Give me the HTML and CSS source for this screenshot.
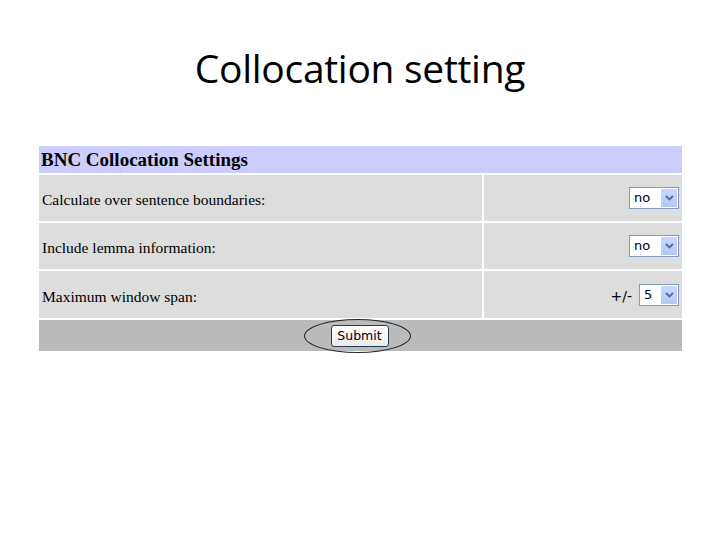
FILE: index.html
```html
<!DOCTYPE html>
<html>
<head>
<meta charset="utf-8">
<link rel="stylesheet" href="styles.css">
</head>
<body>
<h1 class="title">Collocation setting</h1>
<div class="settings">
  <div class="head">BNC Collocation Settings</div>
  <div class="label">Calculate over sentence boundaries:</div>
  <div class="control"><div class="sel"><span class="val">no</span><span class="arrow"><svg width="9" height="6" viewBox="0 0 9 6"><path d="M1 1 L4.5 4.5 L8 1" fill="none" stroke="#4a6cb0" stroke-width="1.8"/></svg></span></div></div>
  <div class="label">Include lemma information:</div>
  <div class="control"><div class="sel"><span class="val">no</span><span class="arrow"><svg width="9" height="6" viewBox="0 0 9 6"><path d="M1 1 L4.5 4.5 L8 1" fill="none" stroke="#4a6cb0" stroke-width="1.8"/></svg></span></div></div>
  <div class="label">Maximum window span:</div>
  <div class="control"><span class="pm">+/-</span><div class="sel narrow"><span class="val">5</span><span class="arrow"><svg width="9" height="6" viewBox="0 0 9 6"><path d="M1 1 L4.5 4.5 L8 1" fill="none" stroke="#4a6cb0" stroke-width="1.8"/></svg></span></div></div>
  <div class="foot">
    <div class="btnwrap">
      <span class="btn">Submit</span>
      <span class="ring"></span>
    </div>
  </div>
</div>
</body>
</html>
```
FILE: styles.css
```css
html, body {
  margin: 0;
  padding: 0;
  background: #ffffff;
}
body {
  width: 720px;
  height: 540px;
  overflow: hidden;
}
.title {
  margin: 0;
  padding-top: 42px;
  height: 146px;
  box-sizing: border-box;
  text-align: center;
  font-family: "Open Sans", sans-serif;
  font-weight: 400;
  font-size: 39px;
  line-height: 52px;
  color: #000;
  letter-spacing: -0.3px;
}
.settings {
  margin-left: 39px;
  width: 643px;
  display: grid;
  grid-template-columns: 443px 198px;
  grid-template-rows: 27px 46px 46px 47px 31px;
  gap: 2px;
  font-family: "Liberation Serif", serif;
}
.head {
  grid-column: 1 / 3;
  background: #ccccff;
  font-weight: bold;
  font-size: 19px;
  padding-left: 2px;
  display: flex;
  align-items: center;
  padding-top: 1px;
  color: #000;
}
.label {
  background: #dddddd;
  font-size: 15.5px;
  display: flex;
  align-items: center;
  padding-left: 3px;
  padding-top: 4px;
  color: #000;
}
.control {
  background: #dddddd;
  display: flex;
  align-items: center;
  justify-content: flex-end;
  padding-right: 3px;
}
.sel {
  width: 50px;
  height: 22px;
  box-sizing: border-box;
  border: 1px solid #7f9db9;
  background: #ffffff;
  display: flex;
  align-items: stretch;
}
.sel.narrow {
  width: 40px;
}
.val {
  flex: 1;
  font-family: "DejaVu Sans", sans-serif;
  font-size: 13px;
  line-height: 20px;
  padding-left: 4px;
  color: #000;
}
.arrow {
  width: 16px;
  margin: 1px;
  background: linear-gradient(#c9d8fb, #b5c9f7);
  display: flex;
  align-items: center;
  justify-content: center;
}
.pm {
  font-family: "DejaVu Sans", sans-serif;
  font-size: 14px;
  margin-right: 7px;
  margin-top: 2px;
  color: #000;
}
.foot {
  grid-column: 1 / 3;
  background: #bbbbbb;
  display: flex;
  justify-content: center;
  align-items: center;
  padding-right: 2px;
}
.btnwrap {
  position: relative;
}
.btn {
  display: block;
  width: 58px;
  height: 22px;
  box-sizing: border-box;
  border: 1px solid #1e3b5a;
  border-radius: 3px;
  background: linear-gradient(#ffffff, #ecebe6);
  font-family: "DejaVu Sans", sans-serif;
  font-size: 12.5px;
  line-height: 20px;
  text-align: center;
  color: #000;
}
.ring {
  position: absolute;
  left: -27px;
  top: -6px;
  width: 105px;
  height: 32px;
  border: 1.3px solid #222;
  border-radius: 50%;
}
```
